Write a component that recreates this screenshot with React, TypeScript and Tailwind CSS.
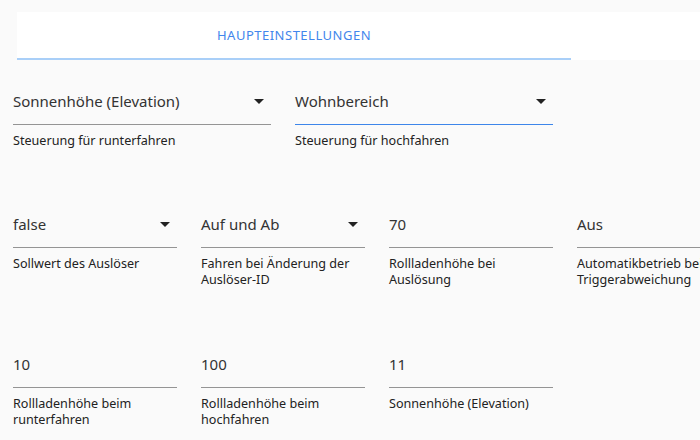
import React from 'react'

const FONT = { fontFamily: '"Noto Sans", "Open Sans", sans-serif' }

function Arrow() {
  return (
    <svg className="absolute right-0 top-[-2px] h-6 w-6 fill-[#222]" viewBox="0 0 24 24">
      <path d="M7 10l5 5 5-5z" />
    </svg>
  )
}

type FieldProps = {
  value: string
  helper: string
  select?: boolean
  focused?: boolean
  width: string
}

function Field({ value, helper, select, focused, width }: FieldProps) {
  return (
    <div className={`${width} shrink-0`}>
      <div
        className={`relative h-[34px] border-b ${
          focused ? 'border-[#3d86ea]' : 'border-[#949494]'
        }`}
      >
        <div className="text-[15px] leading-[20px] text-[#333] whitespace-nowrap">{value}</div>
        {select && <Arrow />}
      </div>
      <div className="mt-2 text-[12.6px] leading-4 text-[#222]">{helper}</div>
    </div>
  )
}

export default function App() {
  return (
    <div className="w-[700px] h-[440px] overflow-hidden bg-[#fafafa]" style={FONT}>
      <div className="pt-3 pl-[17px]">
        <div className="flex h-12 bg-white">
          <div className="relative flex w-[554px] items-center justify-center">
            <span className="text-[13px] uppercase tracking-[0.5px] text-[#4286ec]">Haupteinstellungen</span>
            <div className="absolute bottom-0 left-0 h-[2px] w-full bg-[#a9cff8]" />
          </div>
        </div>
      </div>

      <div className="pl-[13px] pt-[31px]">
        <div className="flex gap-6">
          <Field width="w-[258px]" value="Sonnenhöhe (Elevation)" helper="Steuerung für runterfahren" select />
          <Field width="w-[258px]" value="Wohnbereich" helper="Steuerung für hochfahren" select focused />
        </div>

        <div className="mt-[65px] flex gap-6">
          <Field width="w-[164px]" value="false" helper="Sollwert des Auslöser" select />
          <Field width="w-[164px]" value="Auf und Ab" helper="Fahren bei Änderung der Auslöser-ID" select />
          <Field width="w-[164px]" value="70" helper="Rollladenhöhe bei Auslösung" />
          <Field width="w-[164px]" value="Aus" helper="Automatikbetrieb bei Triggerabweichung" />
        </div>

        <div className="mt-[66px] flex gap-6">
          <Field width="w-[164px]" value="10" helper="Rollladenhöhe beim runterfahren" />
          <Field width="w-[164px]" value="100" helper="Rollladenhöhe beim hochfahren" />
          <Field width="w-[164px]" value="11" helper="Sonnenhöhe (Elevation)" />
        </div>
      </div>
    </div>
  )
}
